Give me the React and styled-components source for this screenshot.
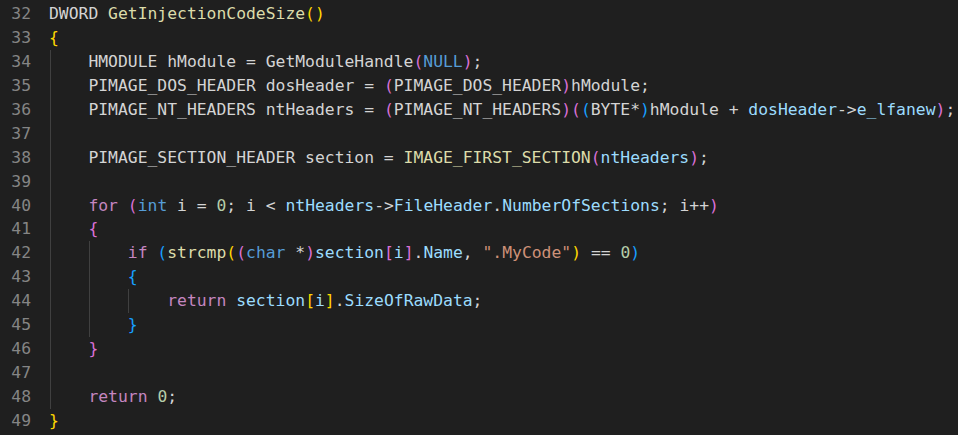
import React from "react";
import styled, { createGlobalStyle } from "styled-components";

const Global = createGlobalStyle`
  html, body { margin: 0; padding: 0; background: #1f1f1f; }
  body { overflow: hidden; }
`;

const C = {
  d: "#d4d4d4",
  fn: "#dcdcaa",
  g: "#ffd700",
  o: "#da70d6",
  b: "#179fff",
  kw: "#c586c0",
  t: "#569cd6",
  v: "#9cdcfe",
  n: "#b5cea8",
  s: "#ce9178",
};

const CH = 9.85;

const Editor = styled.div`
  display: flex;
  flex-direction: column;
  width: 958px;
  height: 435px;
  padding-top: 2px;
  box-sizing: border-box;
  background: #1f1f1f;
  font-family: "DejaVu Sans Mono", "Liberation Mono", monospace;
  font-size: 16.36px;
  line-height: 23.95px;
`;

const Row = styled.div`
  display: flex;
  height: 23.95px;
  white-space: pre;
`;

const LineNo = styled.div`
  width: 31px;
  flex: none;
  text-align: right;
  color: #858585;
`;

const Code = styled.div`
  position: relative;
  margin-left: 18px;
  flex: 1;
`;

const Guide = styled.span`
  position: absolute;
  top: 0;
  bottom: 0;
  width: 1px;
  background: #404040;
  left: ${(p) => p.$col * CH + 0.5}px;
`;

const Tok = styled.span`
  color: ${(p) => p.$c};
`;

const lines = [
  { n: 32, g: [], t: [["DWORD ", "d"], ["GetInjectionCodeSize", "fn"], ["()", "g"]] },
  { n: 33, g: [], t: [["{", "g"]] },
  {
    n: 34, g: [0],
    t: [["    HMODULE hModule = GetModuleHandle", "d"], ["(", "o"], ["NULL", "t"], [")", "o"], [";", "d"]],
  },
  {
    n: 35, g: [0],
    t: [["    PIMAGE_DOS_HEADER dosHeader = ", "d"], ["(", "o"], ["PIMAGE_DOS_HEADER", "d"], [")", "o"], ["hModule;", "d"]],
  },
  {
    n: 36, g: [0],
    t: [
      ["    PIMAGE_NT_HEADERS ntHeaders = ", "d"], ["(", "o"], ["PIMAGE_NT_HEADERS", "d"], [")", "o"],
      ["(", "o"], ["(", "b"], ["BYTE*", "d"], [")", "b"], ["hModule + ", "d"], ["dosHeader", "v"], ["->", "d"],
      ["e_lfanew", "v"], [")", "o"], [";", "d"],
    ],
  },
  { n: 37, g: [0], t: [] },
  {
    n: 38, g: [0],
    t: [["    PIMAGE_SECTION_HEADER section = ", "d"], ["IMAGE_FIRST_SECTION", "fn"], ["(", "o"], ["ntHeaders", "v"], [")", "o"], [";", "d"]],
  },
  { n: 39, g: [0], t: [] },
  {
    n: 40, g: [0],
    t: [
      ["    ", "d"], ["for", "kw"], [" ", "d"], ["(", "o"], ["int", "t"], [" i = ", "d"], ["0", "n"], ["; i < ", "d"],
      ["ntHeaders", "v"], ["->", "d"], ["FileHeader", "v"], [".", "d"], ["NumberOfSections", "v"], ["; i++", "d"], [")", "o"],
    ],
  },
  { n: 41, g: [0], t: [["    ", "d"], ["{", "o"]] },
  {
    n: 42, g: [0, 4],
    t: [
      ["        ", "d"], ["if", "kw"], [" ", "d"], ["(", "b"], ["strcmp", "fn"], ["(", "g"], ["(", "o"], ["char", "t"],
      [" *", "d"], [")", "o"], ["section", "v"], ["[", "o"], ["i", "v"], ["]", "o"], [".", "d"], ["Name", "v"],
      [", ", "d"], ['".MyCode"', "s"], [")", "g"], [" == ", "d"], ["0", "n"], [")", "b"],
    ],
  },
  { n: 43, g: [0, 4], t: [["        ", "d"], ["{", "b"]] },
  {
    n: 44, g: [0, 4, 8],
    t: [
      ["            ", "d"], ["return", "kw"], [" ", "d"], ["section", "v"], ["[", "g"], ["i", "v"], ["]", "g"],
      [".", "d"], ["SizeOfRawData", "v"], [";", "d"],
    ],
  },
  { n: 45, g: [0, 4], t: [["        ", "d"], ["}", "b"]] },
  { n: 46, g: [0], t: [["    ", "d"], ["}", "o"]] },
  { n: 47, g: [0], t: [] },
  { n: 48, g: [0], t: [["    ", "d"], ["return", "kw"], [" ", "d"], ["0", "n"], [";", "d"]] },
  { n: 49, g: [], t: [["}", "g"]] },
];

export default function App() {
  return (
    <>
      <Global />
      <Editor>
        {lines.map((l) => (
          <Row key={l.n}>
            <LineNo>{l.n}</LineNo>
            <Code>
              {l.g.map((c) => (
                <Guide key={c} $col={c} />
              ))}
              {l.t.map(([text, c], i) => (
                <Tok key={i} $c={C[c]}>
                  {text}
                </Tok>
              ))}
            </Code>
          </Row>
        ))}
      </Editor>
    </>
  );
}
